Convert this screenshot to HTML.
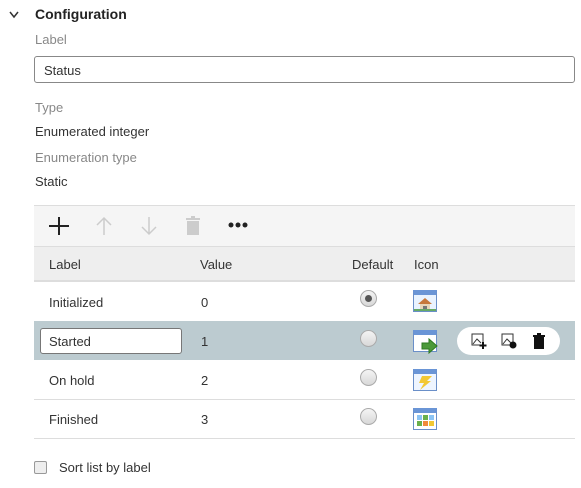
<!DOCTYPE html>
<html><head><meta charset="utf-8"><style>
*{box-sizing:border-box;margin:0;padding:0}
body{width:581px;height:488px;background:#fff;font-family:"Liberation Sans",sans-serif;font-size:13px;color:#333;position:relative;overflow:hidden}
.a{position:absolute}
.g{color:#888}
.rad{position:absolute;width:17px;height:17px;border-radius:50%;border:1px solid #aaa;background:linear-gradient(#f4f4f4,#d8d8d8)}
.ico{position:absolute;width:24px;height:22px;border:1px solid #6a8fc8;background:#fff;border-top:5px solid #6a95d6}
.hl{position:absolute;left:34px;width:541px;height:1px;background:#ddd}
</style></head><body>
<svg class="a" style="left:8px;top:10px" width="12" height="10"><path d="M2 2 L6 7 L10 2" fill="none" stroke="#333" stroke-width="1.5"/></svg>
<div class="a" style="left:35px;top:6px;font-weight:bold;font-size:14px;color:#222">Configuration</div>
<div class="a g" style="left:35px;top:32px">Label</div>
<div class="a" style="left:34px;top:56px;width:541px;height:27px;border:1px solid #888;border-radius:3px;padding:6px 9px">Status</div>
<div class="a g" style="left:35px;top:100px">Type</div>
<div class="a" style="left:35px;top:124px">Enumerated integer</div>
<div class="a g" style="left:35px;top:150px">Enumeration type</div>
<div class="a" style="left:35px;top:174px">Static</div>

<div class="a" style="left:34px;top:205px;width:541px;height:41px;background:#f5f5f5;border-top:1px solid #ddd"></div>
<svg class="a" style="left:47px;top:215px" width="24" height="22"><path d="M12 2V20M2 11H22" stroke="#222" stroke-width="2"/></svg>
<svg class="a" style="left:94px;top:215px" width="20" height="22"><path d="M10 3V20M3 10L10 3L17 10" fill="none" stroke="#ccc" stroke-width="1.5"/></svg>
<svg class="a" style="left:139px;top:215px" width="20" height="22"><path d="M10 2V19M3 12L10 19L17 12" fill="none" stroke="#ccc" stroke-width="1.5"/></svg>
<svg class="a" style="left:185px;top:216px" width="16" height="20"><rect x="2" y="5" width="12" height="14" fill="#ccc"/><rect x="1" y="2" width="14" height="2" fill="#ccc"/><rect x="6" y="0" width="4" height="2" fill="#ccc"/></svg>
<svg class="a" style="left:228px;top:220px" width="22" height="10"><circle cx="3" cy="5" r="2.5" fill="#222"/><circle cx="10" cy="5" r="2.5" fill="#222"/><circle cx="17" cy="5" r="2.5" fill="#222"/></svg>

<div class="a" style="left:34px;top:246px;width:541px;height:36px;background:#eee;border-top:1px solid #ddd;border-bottom:2px solid #ddd"></div>
<div class="a" style="left:49px;top:257px">Label</div>
<div class="a" style="left:200px;top:257px">Value</div>
<div class="a" style="left:352px;top:257px">Default</div>
<div class="a" style="left:414px;top:257px">Icon</div>

<div class="a" style="left:49px;top:295px">Initialized</div>
<div class="a" style="left:201px;top:295px">0</div>
<div class="rad" style="left:360px;top:290px"></div><div class="a" style="left:365px;top:295px;width:7px;height:7px;border-radius:50%;background:#555"></div>
<div class="ico" style="left:413px;top:290px;background:#e9f3ff"><svg width="22" height="16"><path d="M4 9L11 3L18 9Z" fill="#c7783a"/><rect x="6" y="9" width="10" height="6" fill="#e8d6b8"/><rect x="9" y="11" width="4" height="4" fill="#777"/><rect x="0" y="14" width="22" height="2" fill="#6a6"/></svg></div>
<div class="hl" style="top:321px"></div>

<div class="a" style="left:34px;top:321px;width:541px;height:39px;background:#bccbd0"></div>
<div class="a" style="left:40px;top:328px;width:142px;height:26px;border:1px solid #777;border-radius:3px;background:#fff;padding:5px 8px">Started</div>
<div class="a" style="left:201px;top:334px">1</div>
<div class="rad" style="left:360px;top:330px"></div>
<div class="ico" style="left:413px;top:330px"></div>
<svg class="a" style="left:421px;top:338px" width="18" height="16"><path d="M1 5H8V1L16 8L8 15V11H1Z" fill="#4c9a3a" stroke="#2e7a22"/></svg>
<div class="a" style="left:457px;top:327px;width:103px;height:28px;background:#fff;border-radius:14px"></div>
<svg class="a" style="left:471px;top:333px" width="16" height="16"><rect x="1" y="1" width="11" height="11" fill="none" stroke="#333"/><path d="M2 11L6 6L10 10" fill="none" stroke="#333"/><path d="M12 9V16M8.5 12.5H15.5" stroke="#111" stroke-width="2"/></svg>
<svg class="a" style="left:501px;top:333px" width="16" height="16"><rect x="1" y="1" width="11" height="11" fill="none" stroke="#333"/><path d="M2 11L6 6L10 10" fill="none" stroke="#333"/><circle cx="12" cy="12" r="3.5" fill="#111"/></svg>
<svg class="a" style="left:532px;top:333px" width="14" height="16"><rect x="2" y="4" width="10" height="12" fill="#111"/><rect x="1" y="2" width="12" height="2" fill="#111"/><rect x="5" y="0" width="4" height="2" fill="#111"/></svg>

<div class="a" style="left:49px;top:373px">On hold</div>
<div class="a" style="left:201px;top:373px">2</div>
<div class="rad" style="left:360px;top:369px"></div>
<div class="ico" style="left:413px;top:369px;background:#eef5ff"><svg width="22" height="16"><path d="M8 2H18L13 7H17L6 16L10 9H5Z" fill="#f2c833"/></svg></div>
<div class="hl" style="top:399px"></div>

<div class="a" style="left:49px;top:412px">Finished</div>
<div class="a" style="left:201px;top:412px">3</div>
<div class="rad" style="left:360px;top:408px"></div>
<div class="ico" style="left:413px;top:408px"><svg width="22" height="16"><rect x="3" y="2" width="5" height="5" fill="#8cc4f4"/><rect x="9" y="2" width="5" height="5" fill="#6ab04c"/><rect x="15" y="2" width="5" height="5" fill="#8cc4f4"/><rect x="3" y="8" width="5" height="5" fill="#6ab04c"/><rect x="9" y="8" width="5" height="5" fill="#f08a3c"/><rect x="15" y="8" width="5" height="5" fill="#f2c833"/></svg></div>
<div class="hl" style="top:438px"></div>

<div class="a" style="left:34px;top:461px;width:13px;height:13px;border:1px solid #999;border-radius:2px;background:#eee"></div>
<div class="a" style="left:59px;top:460px;color:#333">Sort list by label</div>
</body></html>
